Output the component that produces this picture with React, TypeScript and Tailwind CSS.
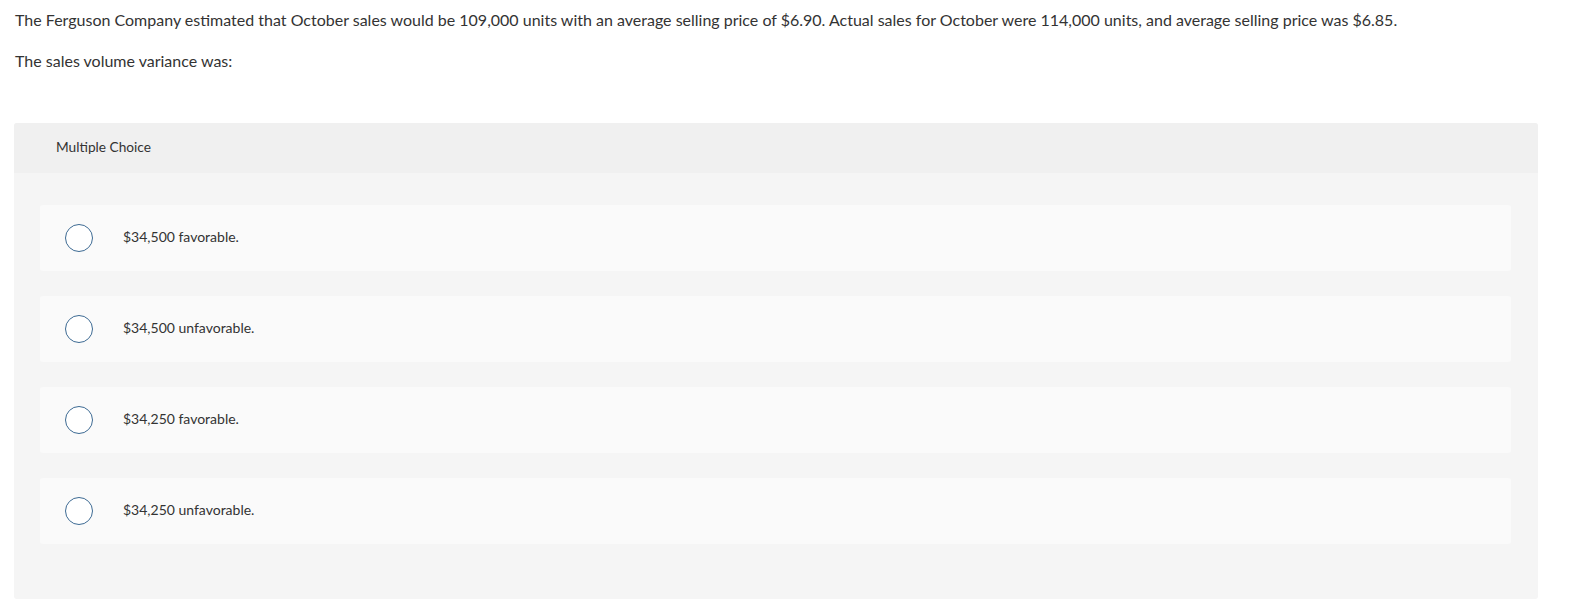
import { JSX } from 'react'

const choices = [
  '$34,500 favorable.',
  '$34,500 unfavorable.',
  '$34,250 favorable.',
  '$34,250 unfavorable.',
]

export default function App(): JSX.Element {
  return (
    <div className="w-screen min-h-screen bg-white px-[14px] pt-[10px] text-[#333] font-['Lato','Open_Sans',sans-serif]">
      <p className="pl-px text-[16px] leading-[20px]">
        The Ferguson Company estimated that October sales would be 109,000 units with an average selling price of $6.90.
        Actual sales for October were 114,000 units, and average selling price was $6.85.
      </p>
      <p className="pl-px mt-[21px] text-[16px] leading-[20px]">The sales volume variance was:</p>

      <div className="mt-[52px] w-[1524px] rounded-[3px] bg-[#f5f5f5] overflow-hidden">
        <div className="h-[50px] flex items-center pl-[42px] pb-px bg-[#f0f0f0] text-[13.7px]">Multiple Choice</div>
        <div className="flex flex-col gap-[25px] pl-[26px] pr-[27px] pt-[32px] pb-[55px]">
          {choices.map((c) => (
            <div key={c} className="h-[66px] flex items-center rounded-[3px] bg-[#fafafa]">
              <span className="ml-[25px] w-[28px] h-[28px] rounded-full border-[1.5px] border-[#3d6a93] bg-white" />
              <span className="ml-[30px] pb-[3px] text-[14px]">{c}</span>
            </div>
          ))}
        </div>
      </div>
    </div>
  )
}
